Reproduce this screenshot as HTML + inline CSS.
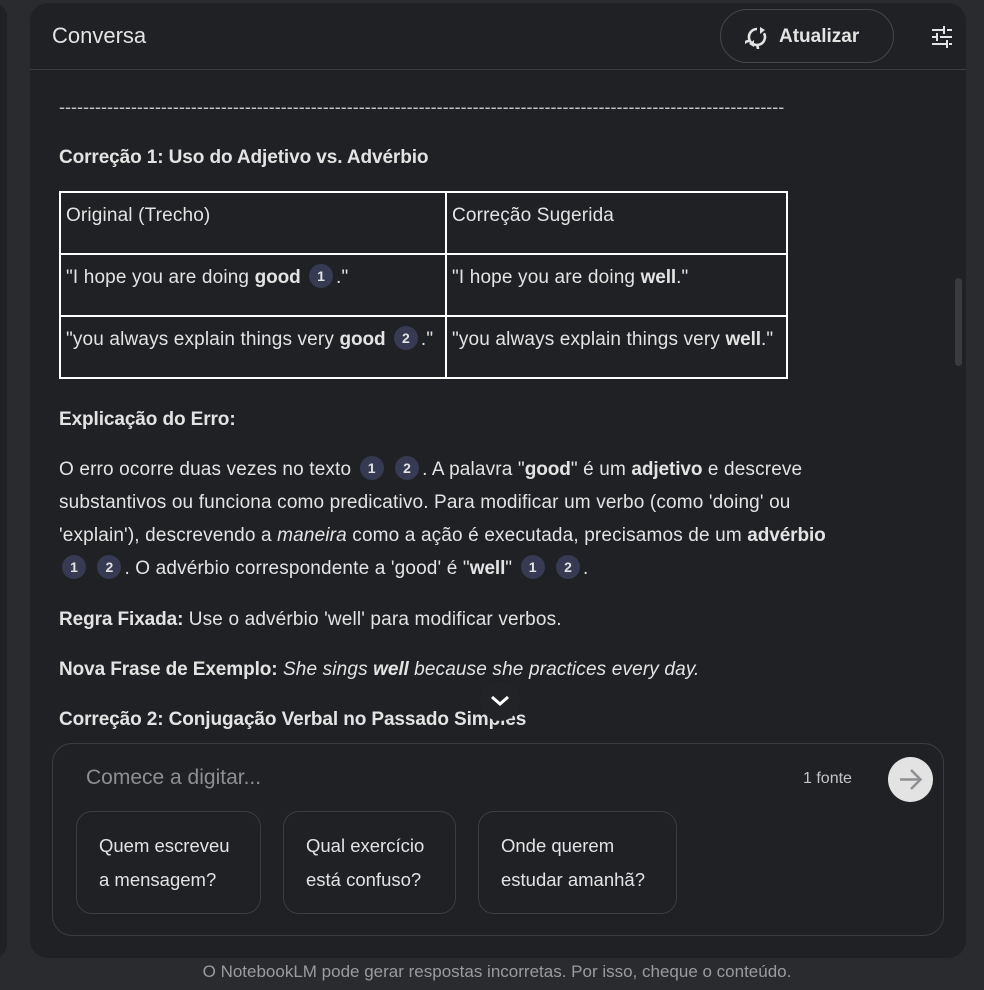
<!DOCTYPE html>
<html><head><meta charset="utf-8"><style>
*{box-sizing:border-box;margin:0;padding:0}
body{width:984px;height:990px;background:#2a2b2e;font-family:"Liberation Sans",sans-serif;color:#e3e3e3;position:relative;overflow:hidden}
.left{position:absolute;left:-20px;top:3px;width:27px;height:955px;background:#202124;border-radius:16px}
.panel{position:absolute;left:30px;top:3px;width:936px;height:955px;background:#202124;border-radius:18px;overflow:hidden}
.hdr{height:67px;border-bottom:1px solid #3c3d40;position:relative}
.hdr .t{position:absolute;left:22px;top:20px;font-size:22px;color:#e3e3e3}
.btn{position:absolute;left:690px;top:6px;width:174px;height:54px;border:1px solid #444649;border-radius:27px;font-size:19px;font-weight:bold;padding:16px 0 0 58px}
.btn svg{position:absolute;left:24px;top:15px}
.tune{position:absolute;left:900px;top:22px}
.c{position:absolute;left:29px;font-size:19px;letter-spacing:0.15px;line-height:33px;white-space:nowrap}
b{font-weight:bold;letter-spacing:-0.1px}
.bd{display:inline-block;width:24px;height:24px;border-radius:12px;background:#363a52;color:#e3e3e3;font-size:14px;font-weight:bold;line-height:24px;text-align:center;vertical-align:middle;margin:0 3px;position:relative;top:-2px;letter-spacing:0}
table{position:absolute;left:29px;top:188px;border-collapse:separate;border-spacing:0;border:1px solid #fff;font-size:19px;letter-spacing:0.15px}
td{border:1px solid #fff;height:62px;padding:0 5px 14px;vertical-align:middle;white-space:nowrap}
.sb{position:absolute;left:925px;top:275px;width:7px;height:88px;border-radius:4px;background:#3a3b3e}
.chev{position:absolute;left:450px;top:678px;width:40px;height:40px;border-radius:20px;background:#222326}
.inp{position:absolute;left:22px;top:740px;width:892px;height:193px;border:1px solid #3c3d40;border-radius:20px}
.ph{position:absolute;left:33px;top:22px;font-size:21px;color:#8e8f92}
.src{position:absolute;left:750px;top:26px;font-size:16px;color:#c4c5c8}
.go{position:absolute;left:835px;top:13px;width:45px;height:45px;border-radius:23px;background:#e3e3e3}
.chip{position:absolute;top:67px;height:103px;border:1px solid #3c3d40;border-radius:16px;font-size:18.5px;line-height:34px;padding:17px 0 0 22px;color:#e3e3e3}
.foot{position:absolute;top:962px;width:100%;text-align:center;font-size:17px;color:#9a9b9e;padding-left:10px}
</style></head><body>
<div class="left"></div>
<div class="panel">
<div class="hdr"><div class="t">Conversa</div>
<div class="btn"><svg width="24" height="24" viewBox="0 0 24 24"><path d="M12 4a8 8 0 1 0 7 4.2M12 20a8 8 0 1 1-7-4.2" fill="none" stroke="#e3e3e3" stroke-width="2.6"/><path d="M15 2l5 3-5 4zM9 22l-5-3 5-4z" fill="#e3e3e3"/></svg>Atualizar</div>
<svg class="tune" width="24" height="24" viewBox="0 0 24 24" fill="#e3e3e3"><path d="M2 4h11v2H2zM17 4h5v2h-5zM13 1h2v8h-2zM2 11h4v2H2zM10 11h12v2H10zM6 8h2v8H6zM2 18h14v2H2zM19 18h3v2h-3zM16 15h2v8h-2z"/></svg>
</div>
<div class="c" style="top:88px;color:#c4c5c8;font-size:18px;letter-spacing:0">-------------------------------------------------------------------------------------------------------------------------</div>
<div class="c" style="top:138px"><b>Correção 1: Uso do Adjetivo vs. Advérbio</b></div>
<table>
<tr><td style="width:386px">Original (Trecho)</td><td style="width:341px">Correção Sugerida</td></tr>
<tr><td>"I hope you are doing <b>good</b> <span class="bd">1</span>."</td><td>"I hope you are doing <b>well</b>."</td></tr>
<tr><td>"you always explain things very <b>good</b> <span class="bd">2</span>."</td><td>"you always explain things very <b>well</b>."</td></tr>
</table>
<div class="sb"></div>
<div class="c" style="top:400px"><b>Explicação do Erro:</b></div>
<div class="c" style="top:450px">O erro ocorre duas vezes no texto <span class="bd">1</span> <span class="bd">2</span>. A palavra "<b>good</b>" é um <b>adjetivo</b> e descreve<br>substantivos ou funciona como predicativo. Para modificar um verbo (como 'doing' ou<br>'explain'), descrevendo a <i>maneira</i> como a ação é executada, precisamos de um <b>advérbio</b><br> <span class="bd">1</span> <span class="bd">2</span>. O advérbio correspondente a 'good' é "<b>well</b>" <span class="bd">1</span> <span class="bd">2</span>.</div>
<div class="c" style="top:600px"><b>Regra Fixada:</b> Use o advérbio 'well' para modificar verbos.</div>
<div class="c" style="top:650px"><b>Nova Frase de Exemplo:</b> <i>She sings <b>well</b> because she practices every day.</i></div>
<div class="c" style="top:700px"><b>Correção 2: Conjugação Verbal no Passado Simples</b></div>
<div class="chev"><svg width="40" height="40" viewBox="0 0 40 40"><path d="M12 16l8 7 8-7" fill="none" stroke="#fff" stroke-width="3"/></svg></div>
<div class="inp">
<div class="ph">Comece a digitar...</div>
<div class="src">1 fonte</div>
<div class="go"><svg width="45" height="45" viewBox="0 0 45 45"><path d="M12 22.5h20M23 13l9.5 9.5L23 32" fill="none" stroke="#8e8f92" stroke-width="2.5"/></svg></div>
<div class="chip" style="left:23px;width:185px">Quem escreveu<br>a mensagem?</div>
<div class="chip" style="left:230px;width:173px">Qual exercício<br>está confuso?</div>
<div class="chip" style="left:425px;width:199px">Onde querem<br>estudar amanhã?</div>
</div>
</div>
<div class="foot">O NotebookLM pode gerar respostas incorretas. Por isso, cheque o conteúdo.</div>
</body></html>
